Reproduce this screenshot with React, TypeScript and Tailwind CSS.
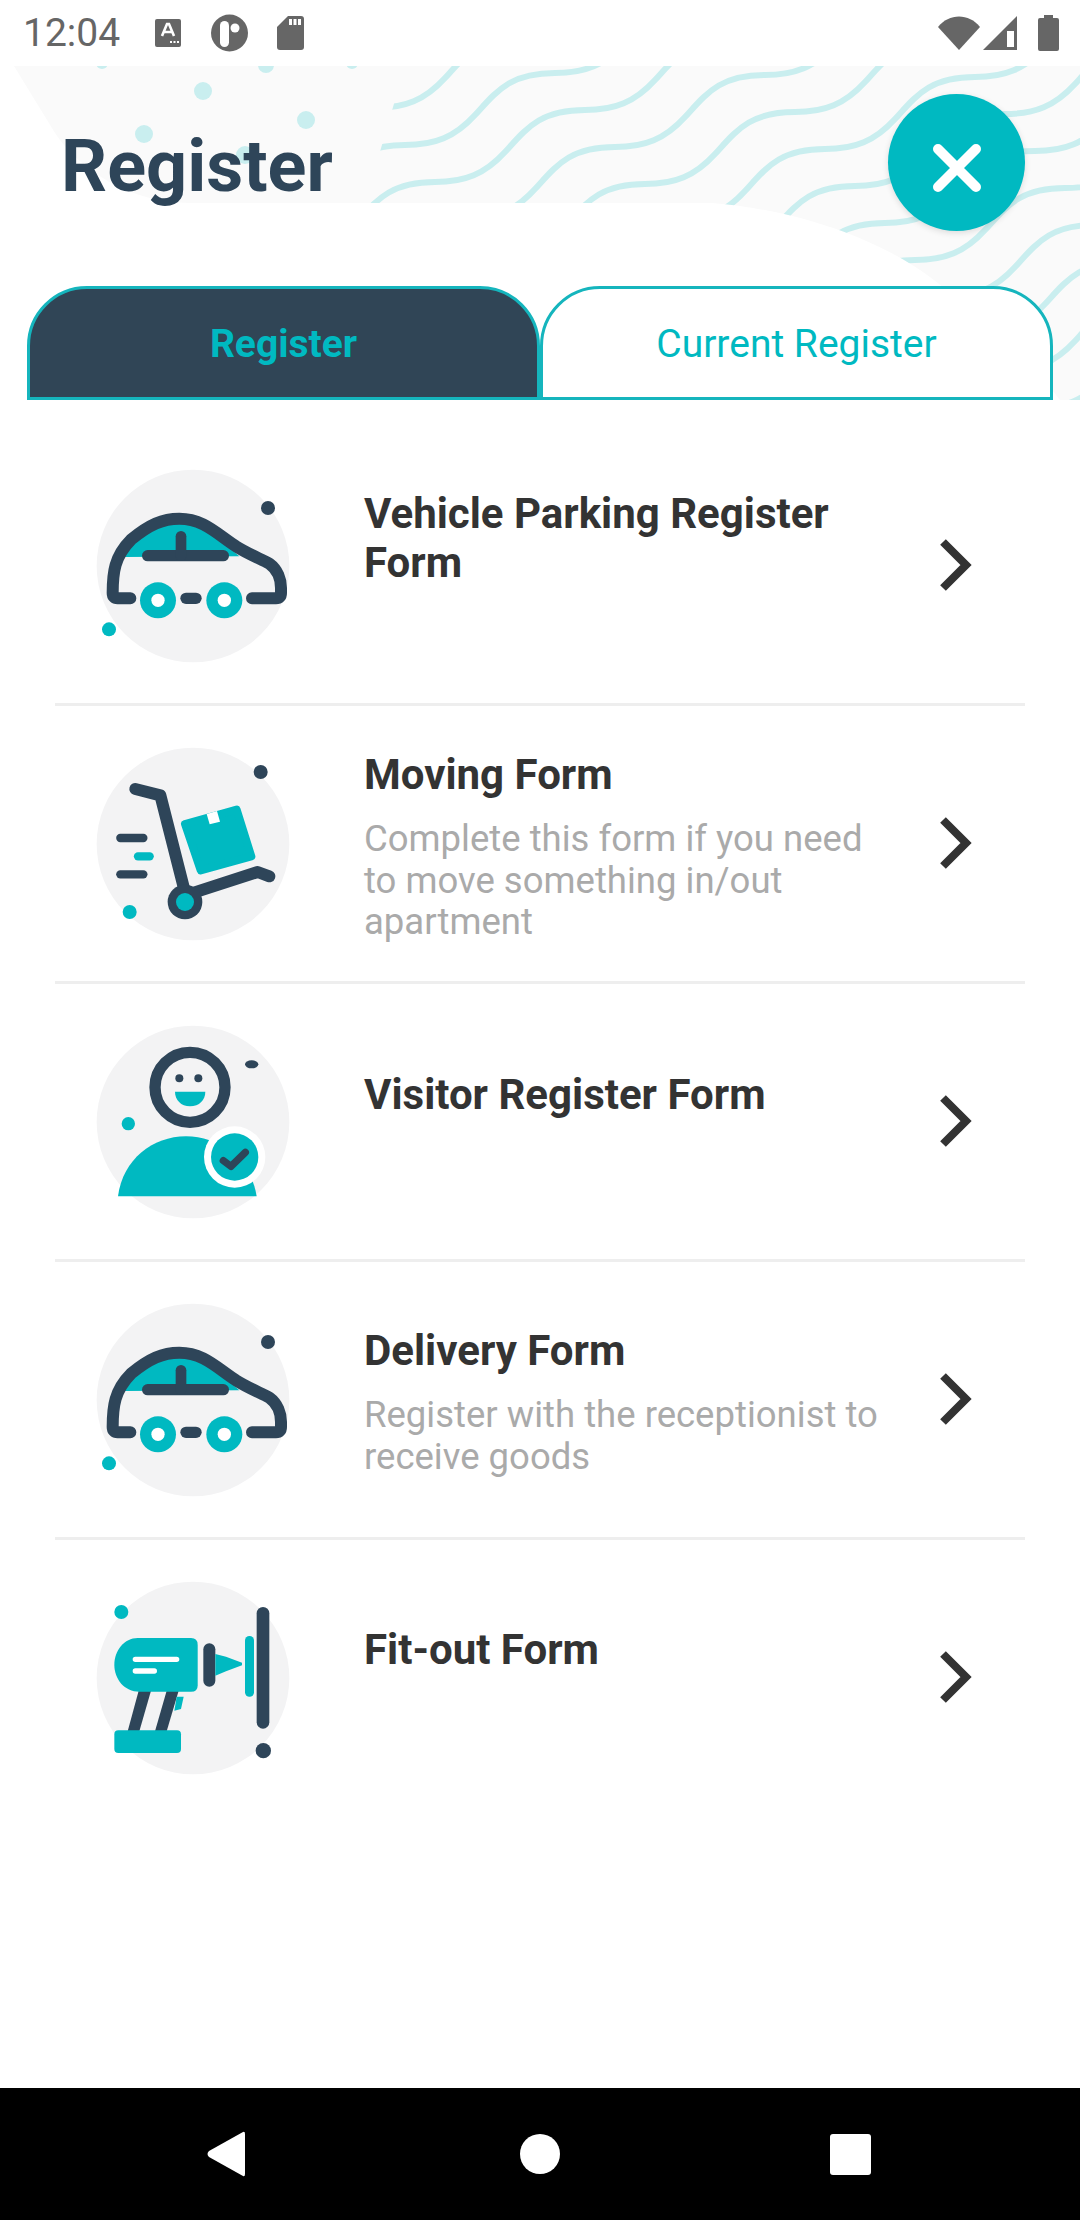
import React from "react";

const TEAL = "#00B9C1";
const NAVY = "#2E4559";

// lattice of wavy lines behind the header
const waves = Array.from({ length: 17 }, (_, i) => {
  const k = i - 4;
  const x = 435 + 30 * k - 600;
  const y = 182 + 37 * k + 288;
  return `M${x} ${y}` + " c30 0 50 -8 70 -30 c22 -24 35 -42 80 -42".repeat(10);
});

const HeaderArt = () => (
  <svg className="absolute top-0 left-0" width="1080" height="334" viewBox="0 66 1080 334">
    <defs>
      <clipPath id="waveClip">
        <path d="M405 66 L365 203 H712 C800 210 880 240 930 277 C980 315 1030 360 1060 400 H1080 V66 Z" />
      </clipPath>
    </defs>
    <path d="M14 66 L55 133 C80 170 130 203 190 203 H712 C800 210 880 240 930 277 C980 315 1030 360 1060 400 H1080 V66 Z" fill="#FAFAFA" />
    <g fill="#C9EEEF">
      <circle cx="203" cy="91" r="9" />
      <circle cx="306" cy="120" r="9" />
      <circle cx="144" cy="134" r="9" />
      <circle cx="245" cy="155" r="9" />
      <circle cx="266" cy="65" r="8" />
      <circle cx="102" cy="63" r="6" />
      <circle cx="352" cy="63" r="6" />
    </g>
    <g clipPath="url(#waveClip)" fill="none" stroke="#C9EEEF" strokeWidth="6">
      {waves.map((d) => (
        <path key={d} d={d} />
      ))}
    </g>
  </svg>
);

const CarIcon = () => (
  <svg className="shrink-0" width="220" height="220" viewBox="71 49 660 660">
    <circle cx="401" cy="379" r="289" fill="#F3F3F4" />
    <circle cx="626" cy="205" r="21" fill={NAVY} />
    <circle cx="149" cy="569" r="21" fill={TEAL} />
    <path d="M195 352 C230 290 300 235 360 235 C420 235 470 290 540 350 Z" fill={TEAL} />
    <g fill="none" stroke={NAVY} strokeLinecap="round" strokeLinejoin="round">
      <path strokeWidth="36" d="M213 476 H175 Q160 476 160 460 C160 400 165 350 215 300 C270 255 310 237 360 237 C430 237 470 280 530 320 C570 345 610 360 630 372 C655 390 665 420 665 445 V460 Q665 476 650 476 H578" />
      <path strokeWidth="34" d="M265 348 H492" />
      <path strokeWidth="32" d="M365 290 V348" />
      <path strokeWidth="34" d="M380 476 H410" />
    </g>
    <circle cx="296" cy="482" r="54" fill={TEAL} />
    <circle cx="296" cy="482" r="20" fill="#fff" />
    <circle cx="495" cy="482" r="54" fill={TEAL} />
    <circle cx="495" cy="482" r="20" fill="#fff" />
  </svg>
);

const TrolleyIcon = () => (
  <svg className="shrink-0" width="220" height="220" viewBox="71 43 660 660">
    <circle cx="401" cy="373" r="289" fill="#F3F3F4" />
    <circle cx="604" cy="157" r="21" fill={NAVY} />
    <circle cx="211" cy="577" r="21" fill={TEAL} />
    <g fill="none" strokeLinecap="round" strokeLinejoin="round">
      <path stroke={NAVY} strokeWidth="25" d="M183 355 H252" />
      <path stroke={TEAL} strokeWidth="25" d="M236 410 H271" />
      <path stroke={NAVY} strokeWidth="25" d="M183 464 H252" />
      <path stroke={NAVY} strokeWidth="36" d="M228 208 L303 227 L375 510" />
      <path stroke={NAVY} strokeWidth="36" d="M385 525 L595 457 L630 470" />
    </g>
    <circle cx="377" cy="547" r="52" fill={NAVY} />
    <circle cx="377" cy="547" r="27" fill={TEAL} />
    <polygon points="377,313 532,270 576,410 424,452" fill={TEAL} stroke={TEAL} strokeWidth="24" strokeLinejoin="round" />
    <polygon points="442,283 473,274 482,306 451,314" fill="#fff" />
  </svg>
);

const VisitorIcon = () => (
  <svg className="shrink-0" width="220" height="220" viewBox="71 37 660 660">
    <circle cx="401" cy="367" r="289" fill="#F3F3F4" />
    <circle cx="392" cy="263" r="105" fill="none" stroke={NAVY} strokeWidth="34" />
    <circle cx="360" cy="236" r="12" fill={NAVY} />
    <circle cx="417" cy="236" r="12" fill={NAVY} />
    <path d="M347 276 H438 C438 300 420 320 392 320 C365 320 347 300 347 276 Z" fill={TEAL} />
    <ellipse cx="577" cy="194" rx="20" ry="12" fill={NAVY} />
    <circle cx="207" cy="372" r="20" fill={TEAL} />
    <path d="M176 590 C190 480 280 410 380 410 C480 410 575 480 592 590 Z" fill={TEAL} />
    <circle cx="526" cy="472" r="92" fill="#fff" />
    <circle cx="526" cy="472" r="71" fill={TEAL} />
    <path d="M492 483 L515 500 L558 458" fill="none" stroke={NAVY} strokeWidth="22" strokeLinecap="round" strokeLinejoin="round" />
  </svg>
);

const DrillIcon = () => (
  <svg className="shrink-0" width="220" height="220" viewBox="71 22 660 660">
    <circle cx="401" cy="352" r="289" fill="#F3F3F4" />
    <circle cx="186" cy="154" r="21" fill={TEAL} />
    <circle cx="612" cy="570" r="23" fill={NAVY} />
    <polygon points="238,390 275,390 240,512 205,512" fill={NAVY} />
    <polygon points="322,390 358,390 322,512 287,512" fill={NAVY} />
    <polygon points="352,408 373,408 365,445 345,450" fill={TEAL} />
    <path d="M235 232 H395 Q415 232 415 252 V375 Q415 393 395 393 H240 C195 393 165 355 165 312 C165 270 195 232 235 232 Z" fill={TEAL} />
    <path d="M228 296 H352 M228 331 H285" stroke="#fff" strokeWidth="16" strokeLinecap="round" />
    <rect x="165" y="509" width="200" height="68" rx="12" fill={TEAL} />
    <rect x="432" y="248" width="36" height="130" rx="18" fill={NAVY} />
    <path d="M468 280 L500 288 L548 306 V314 L500 332 L468 345 Z" fill={TEAL} />
    <rect x="557" y="226" width="27" height="182" rx="13" fill={TEAL} />
    <rect x="592" y="139" width="38" height="365" rx="19" fill={NAVY} />
  </svg>
);

const Chevron = () => (
  <svg className="shrink-0 self-center -mt-[29px] ml-auto mr-[50px]" width="40" height="60" viewBox="0 0 40 60">
    <path d="M8 7 L31 30 L8 53" fill="none" stroke="#333333" strokeWidth="8" />
  </svg>
);

const rows = [
  { icon: <CarIcon />, title: "Vehicle Parking Register Form", desc: "", pad: "pt-[61px]" },
  { icon: <TrolleyIcon />, title: "Moving Form", desc: "Complete this form if you need to move something in/out apartment", pad: "pt-[44px]" },
  { icon: <VisitorIcon />, title: "Visitor Register Form", desc: "", pad: "pt-[86px]" },
  { icon: <CarIcon />, title: "Delivery Form", desc: "Register with the receptionist to receive goods", pad: "pt-[64px]" },
  { icon: <DrillIcon />, title: "Fit-out Form", desc: "", pad: "pt-[85px]" },
];

export default function App() {
  return (
    <div className="w-[1080px] h-[2220px] flex flex-col bg-white overflow-hidden font-['Roboto',sans-serif]">
      {/* Status bar */}
      <div className="h-[66px] shrink-0 flex items-center pl-[23px] pr-[21px] text-[#666666]">
        <span className="text-[39px] leading-none w-[95px]">12:04</span>
        <svg className="ml-[37px]" width="26" height="28" viewBox="0 0 26 28">
          <rect width="26" height="28" rx="2" fill="#666666" />
          <path d="M7 17 L12 5 H14 L19 17 M9 13 H17" fill="none" stroke="#fff" strokeWidth="2.6" />
          <path d="M15 23 h2 M18.5 23 h2 M22 23 h2" stroke="#fff" strokeWidth="2" />
        </svg>
        <svg className="ml-[30px]" width="37" height="38" viewBox="0 0 37 38">
          <circle cx="18.5" cy="19" r="18.5" fill="#666666" />
          <rect x="9" y="7" width="9" height="26" rx="4.5" fill="#fff" />
          <circle cx="24" cy="14" r="4.5" fill="#fff" />
        </svg>
        <svg className="ml-[29px]" width="27" height="34" viewBox="0 0 27 34">
          <path d="M11 0 H24 Q27 0 27 3 V31 Q27 34 24 34 H3 Q0 34 0 31 V11 Z" fill="#666666" />
          <path d="M12 3 h3 v6 h-3 Z M16.5 3 h3 v6 h-3 Z M21 3 h3 v6 h-3 Z" fill="#fff" />
        </svg>
        <svg className="ml-auto" width="42" height="34" viewBox="0 0 42 34">
          <path d="M0 11 C11 -3 31 -3 42 11 L21 34 Z" fill="#666666" />
        </svg>
        <svg className="ml-[3px]" width="34" height="34" viewBox="0 0 34 34">
          <path d="M34 0 V34 H0 Z" fill="#666666" />
          <path d="M24 15 H31 V31 H24 Z" fill="#fff" />
        </svg>
        <svg className="ml-[21px]" width="21" height="36" viewBox="0 0 21 36">
          <path d="M6 0 H15 V3 H19 Q21 3 21 5 V34 Q21 36 19 36 H2 Q0 36 0 34 V5 Q0 3 2 3 H6 Z" fill="#666666" />
        </svg>
      </div>

      {/* Header */}
      <div className="relative h-[334px] shrink-0 flex flex-col">
        <HeaderArt />
        <div className="relative flex items-start justify-between pt-[28px] pl-[61px] pr-[55px]">
          <h1 className="mt-[31px] text-[72px] leading-[84px] font-bold text-[#2E4559]">Register</h1>
          <button className="relative w-[137px] h-[137px] rounded-full bg-[#00B9C1] shadow-[0_2px_6px_rgba(0,0,0,0.12)] flex items-center justify-center">
            <svg className="mt-[11px]" width="56" height="56" viewBox="0 0 56 56">
              <path d="M9 9 L47 47 M47 9 L9 47" stroke="#fff" strokeWidth="10" strokeLinecap="round" />
            </svg>
          </button>
        </div>
        <div className="relative mt-auto mx-[27px] grid grid-cols-2 h-[114px]">
          <div className="rounded-t-[60px] border-[3px] border-[#15B5BD] bg-[#304556] flex items-center justify-center pt-[3px] text-[39px] font-bold text-[#00B9C1]">
            Register
          </div>
          <div className="rounded-t-[60px] border-[3px] border-[#15B5BD] bg-white flex items-center justify-center pt-[3px] text-[39px] text-[#00B9C1]">
            Current Register
          </div>
        </div>
      </div>

      {/* Form list */}
      <div className="flex-1 pt-[28px] px-[55px]">
        {rows.map((row, i) => (
          <div
            key={row.title}
            className={
              i < rows.length - 1
                ? "flex h-[278px] pt-[28px] pl-[28px] border-b-[3px] border-[#EEEEEE]"
                : "flex h-[278px] pt-[28px] pl-[28px] border-b-[3px] border-transparent"
            }
          >
            {row.icon}
            <div className={`ml-[61px] w-[525px] -mt-[28px] ${row.pad}`}>
              <div className="text-[42px] leading-[49px] font-bold text-[#333333]">{row.title}</div>
              {row.desc && (
                <div className="mt-[19px] text-[36.5px] leading-[41.5px] text-[#AAAAAA]">{row.desc}</div>
              )}
            </div>
            <Chevron />
          </div>
        ))}
      </div>

      {/* Nav bar */}
      <div className="h-[132px] shrink-0 bg-black flex items-center pl-[207px]">
        <svg width="38" height="46" viewBox="0 0 38 46">
          <path d="M36 1 Q38 0 38 3 V43 Q38 46 36 45 L2 26 Q-1 23 2 20 Z" fill="#fff" />
        </svg>
        <div className="ml-[275px] w-[40px] h-[40px] rounded-full bg-white" />
        <div className="ml-[270px] w-[41px] h-[41px] rounded-[3px] bg-white" />
      </div>
    </div>
  );
}
